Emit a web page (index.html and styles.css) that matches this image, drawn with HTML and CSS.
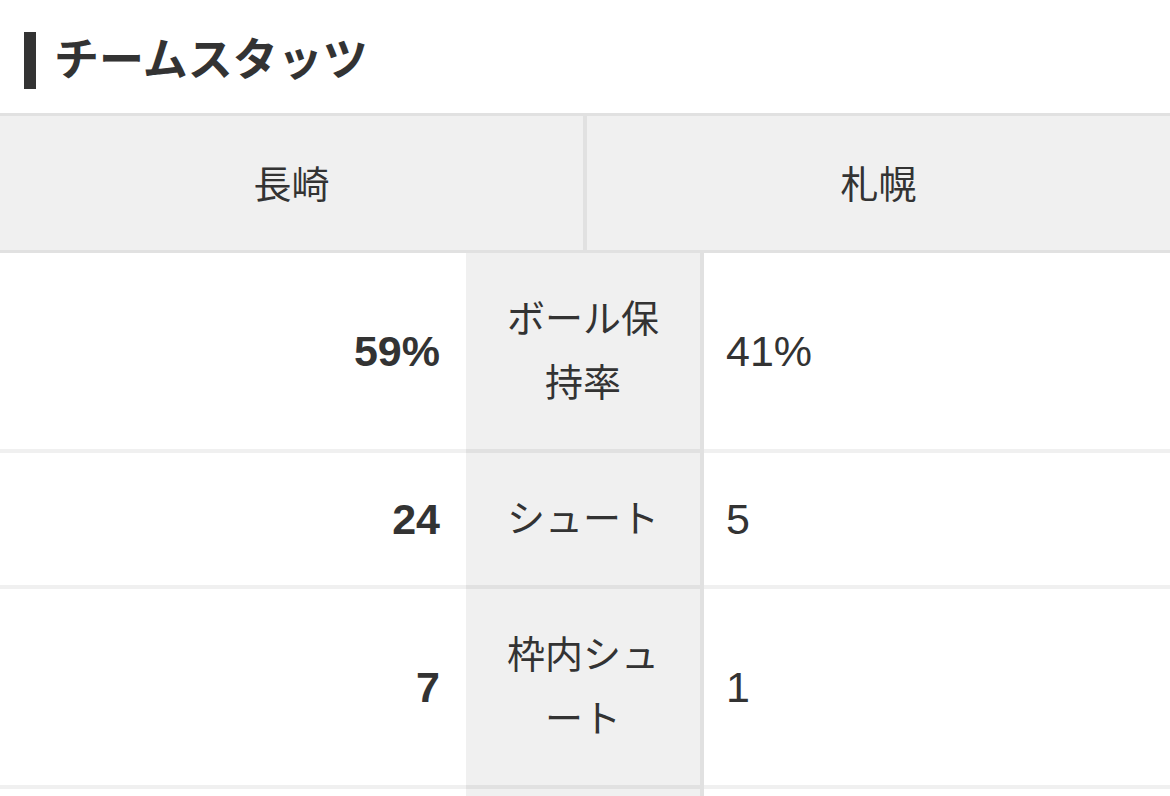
FILE: index.html
```html
<!DOCTYPE html>
<html lang="ja">
<head>
    <meta charset="UTF-8">
    <meta name="viewport" content="width=device-width, initial-scale=1.0">
    <title>チームスタッツ</title>
    <link rel="stylesheet" href="styles.css">
</head>
<body>

    <h2 class="section-title">チームスタッツ</h2>

    <div class="team-header">
        <div class="team-name home">長崎</div>
        <div class="team-name">札幌</div>
    </div>

    <div class="stats">
        <div class="stat-row">
            <div class="stat-value home">59%</div>
            <div class="stat-label">ボール保持率</div>
            <div class="stat-value away">41%</div>
        </div>
        <div class="stat-row">
            <div class="stat-value home">24</div>
            <div class="stat-label">シュート</div>
            <div class="stat-value away">5</div>
        </div>
        <div class="stat-row">
            <div class="stat-value home">7</div>
            <div class="stat-label">枠内シュート</div>
            <div class="stat-value away">1</div>
        </div>
        <!-- next row starts just below the fold -->
        <div class="stat-row">
            <div class="stat-value home"></div>
            <div class="stat-label"></div>
            <div class="stat-value away"></div>
        </div>
    </div>

</body>
</html>
```

FILE: styles.css
```css
body {
    margin: 0;
    padding-top: 32px;
    background-color: #fff;
    color: #333;
    font-family: "Liberation Sans", "Noto Sans CJK JP", sans-serif;
}

.section-title {
    margin: 0 0 24px 24px;
    padding-left: 18px;
    border-left: 12px solid #333;
    font-size: 45px;
    line-height: 57px;
    font-weight: bold;
}

.team-header {
    display: grid;
    grid-template-columns: 587px 1fr;
    background-color: #f0f0f0;
    border-top: 3px solid #e1e1e1;
    border-bottom: 3px solid #e1e1e1;
}

.team-name {
    height: 130px;
    padding-bottom: 4px;
    display: flex;
    align-items: center;
    justify-content: center;
    font-size: 38px;
}

.team-name.home {
    border-right: 4px solid #e1e1e1;
}

.stat-row {
    display: grid;
    grid-template-columns: 466px 238px 1fr;
    min-height: 132px;
}

.stat-value {
    display: flex;
    align-items: center;
    font-size: 43px;
    border-bottom: 4px solid #f0f0f0;
}

.stat-value.home {
    justify-content: flex-end;
    padding-right: 26px;
    font-weight: bold;
}

.stat-value.away {
    padding-left: 22px;
}

.stat-label {
    padding: 34px 38px;
    background-color: #f0f0f0;
    border-right: 4px solid #e1e1e1;
    border-bottom: 4px solid #e1e1e1;
    text-align: center;
    font-size: 38px;
    line-height: 64px;
    line-break: loose;
}
```
